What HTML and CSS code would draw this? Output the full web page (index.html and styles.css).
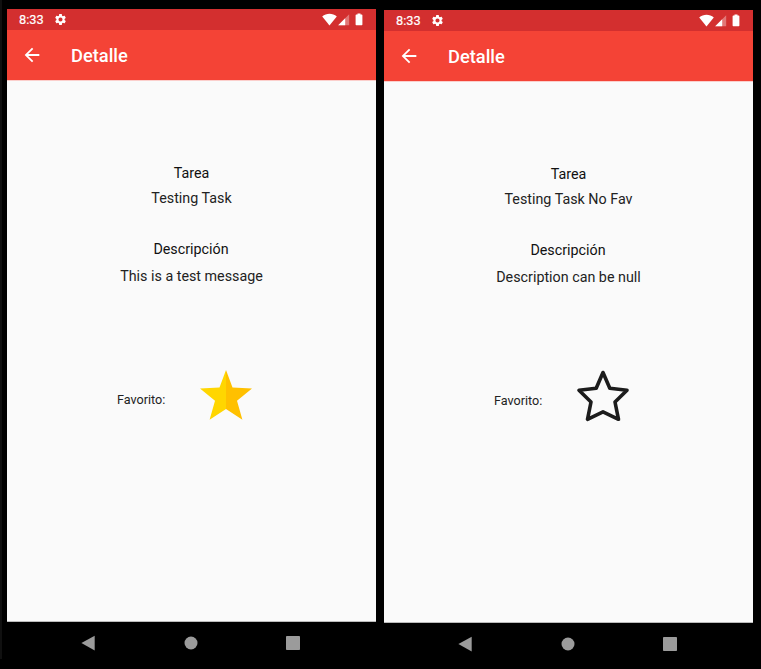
FILE: index.html
```html
<!DOCTYPE html>
<html lang="es">
<head>
<meta charset="utf-8">
<title>Detalle</title>
<link rel="stylesheet" href="styles.css">
</head>
<body>
<svg class="defs" width="0" height="0" aria-hidden="true">
  <symbol id="gear" viewBox="0 0 24 24"><path fill-rule="evenodd" d="M19.4 13c.04-.3.1-.65.1-1s-.03-.7-.1-1l2.1-1.65c.2-.15.25-.42.12-.64l-2-3.46c-.12-.22-.4-.3-.6-.22l-2.5 1c-.5-.4-1.06-.73-1.7-.98l-.37-2.65A.5.5 0 0 0 14 2h-4a.5.5 0 0 0-.5.42l-.37 2.65c-.63.25-1.17.6-1.7.98l-2.48-1c-.23-.1-.5 0-.6.22l-2 3.46c-.14.22-.08.5.1.64L4.57 11c-.04.3-.07.66-.07 1s.03.67.07 1l-2.1 1.65c-.2.15-.25.42-.12.64l2 3.46c.12.22.4.3.6.22l2.48-1c.53.4 1.08.73 1.7.98l.38 2.65c.03.24.24.4.5.4h4c.25 0 .46-.16.5-.4l.36-2.65c.63-.25 1.18-.6 1.7-.98l2.5 1c.22.08.48 0 .6-.22l2-3.46c.12-.22.07-.5-.12-.64zM12 15.8a3.8 3.8 0 1 1 0-7.6 3.8 3.8 0 0 1 0 7.6z"/></symbol>
  <symbol id="wifi" viewBox="0 0 14 12"><path d="M.2 3.2C4-.1 10-.1 13.8 3.2L7 11.5z"/></symbol>
  <symbol id="signal" viewBox="0 0 12 12"><path opacity=".35" d="M11.2.2v11H.2z"/><path d="M7.2 4.2v7h-7z"/></symbol>
  <symbol id="battery" viewBox="0 0 8 13"><path d="M2.5.4h3v1.2h1.2q.7 0 .7.7v9.2q0 .7-.7.7H1.3q-.7 0-.7-.7V2.300q0-.7.7-.7h1.200z"/></symbol>
  <symbol id="back" viewBox="0 0 24 24"><path d="M20 11H7.830l5.590-5.590L12 4l-8 8 8 8 1.410-1.410L7.830 13H20z"/></symbol>
</svg>
<main class="screens">
  <section class="phone">
    <div class="status">
      <span class="clock">8:33</span>
      <svg class="gear"><use href="#gear"/></svg>
      <svg class="wifi"><use href="#wifi"/></svg>
      <svg class="signal"><use href="#signal"/></svg>
      <svg class="battery"><use href="#battery"/></svg>
    </div>
    <header class="appbar">
      <svg class="back"><use href="#back"/></svg>
      <h1 class="title">Detalle</h1>
    </header>
    <div class="content">
      <p class="label">Tarea</p>
      <p class="value">Testing Task</p>
      <p class="label second">Descripción</p>
      <p class="value detail">This is a test message</p>
      <div class="favorite">
        <span class="fav-label">Favorito:</span>
        <svg class="star" viewBox="0 0 54 52">
          <path fill="#ffd600" d="M27 1L20.500 18.500L1 19.500L16 31.800L10.600 50.800L27 40z"/>
          <path fill="#ffc000" d="M27 1L33.500 18.500L53 19.500L38 31.800L43.400 50.800L27 40z"/>
        </svg>
      </div>
    </div>
    <nav class="navbar">
      <svg class="nav-icon" viewBox="0 0 16 16"><path d="M13.700.700v14.800L.400 8.100z"/></svg>
      <svg class="nav-icon" viewBox="0 0 16 16"><circle cx="8" cy="8" r="6.500"/></svg>
      <svg class="nav-icon" viewBox="0 0 16 16"><rect x="1" y="1" width="14" height="14" rx=".8"/></svg>
    </nav>
  </section>
  <section class="phone lower">
    <div class="status">
      <span class="clock">8:33</span>
      <svg class="gear"><use href="#gear"/></svg>
      <svg class="wifi"><use href="#wifi"/></svg>
      <svg class="signal"><use href="#signal"/></svg>
      <svg class="battery"><use href="#battery"/></svg>
    </div>
    <header class="appbar">
      <svg class="back"><use href="#back"/></svg>
      <h1 class="title">Detalle</h1>
    </header>
    <div class="content">
      <p class="label">Tarea</p>
      <p class="value">Testing Task No Fav</p>
      <p class="label second">Descripción</p>
      <p class="value detail">Description can be null</p>
      <div class="favorite">
        <span class="fav-label">Favorito:</span>
        <svg class="star" viewBox="0 0 54 52">
          <path class="outline" d="M27 2.500L33.800 18.300L51 20.200L39 32L42.500 49.300L27 41.800L11.500 49.300L15 32L3 20.200L20.200 18.300z"/>
        </svg>
      </div>
    </div>
    <nav class="navbar">
      <svg class="nav-icon" viewBox="0 0 16 16"><path d="M13.700.700v14.800L.400 8.100z"/></svg>
      <svg class="nav-icon" viewBox="0 0 16 16"><circle cx="8" cy="8" r="6.500"/></svg>
      <svg class="nav-icon" viewBox="0 0 16 16"><rect x="1" y="1" width="14" height="14" rx=".8"/></svg>
    </nav>
  </section>
</main>
</body>
</html>
```
FILE: styles.css
```css
* { box-sizing: border-box; }
body {
  margin: 0;
  background: #000;
  font-family: Roboto, "Liberation Sans", sans-serif;
  overflow: hidden;
}
.defs { display: block; }
.screens {
  display: flex;
  gap: 8px;
  height: 659px;
  padding: 9px 0 0 5px;
  border-left: 2px solid #101010;
}
.phone { width: 369px; flex: none; }
.lower { margin-top: 1px; }
.status {
  display: flex;
  align-items: center;
  height: 21px;
  padding: 0 13px 0 12px;
  background: #d32f2f;
  color: #fff;
  fill: #fff;
}
.clock { width: 35px; font-size: 12.8px; line-height: 21px; font-weight: 400; -webkit-text-stroke: .2px #fff; }
.gear { width: 13px; height: 13px; }
.wifi { width: 15px; height: 13px; margin: 0 0 1px auto; }
.signal { width: 12px; height: 12px; margin: 0 5px 0 1px; }
.battery { width: 8px; height: 13px; margin-bottom: 1px; }
.appbar {
  display: flex;
  align-items: center;
  height: 50px;
  padding-left: 14px;
  background: #f44336;
}
.back { width: 22px; height: 22px; fill: #fff; }
.title {
  margin: 2px 0 0 28px;
  color: #fff;
  font-size: 18.3px;
  line-height: 24px;
  font-weight: 500;
}
.content {
  height: 542px;
  padding-top: 82px;
  background: #fafafa;
  border-top: 1px solid #fbcfcc;
  border-bottom: 1px solid #bbb;
  text-align: center;
  color: #111;
}
.label, .value { margin: 0; font-size: 14.300px; line-height: 20px; }
.value { margin-top: 5px; color: #222; }
.second { margin-top: 31px; padding-right: 1px; }
.detail { margin-top: 7px; }
.favorite {
  display: flex;
  align-items: center;
  margin-top: 83px;
  padding-left: 110px;
}
.fav-label { width: 82px; text-align: left; font-size: 12.600px; line-height: 16px; padding-top: 9px; color: #222; }
.star { width: 54px; height: 52px; }
.outline { fill: none; stroke: #1c1c1c; stroke-width: 3.600; stroke-linejoin: round; }
.navbar {
  display: flex;
  gap: 86px;
  height: 37px;
  padding: 13px 0 0 74px;
}
.nav-icon { width: 16px; height: 16px; fill: #9b9b9b; }
```
